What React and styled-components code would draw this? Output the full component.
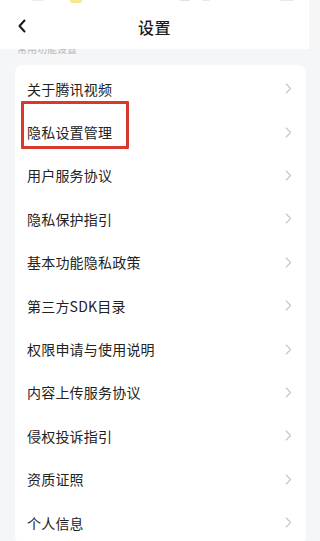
import React from "react";
import styled, { createGlobalStyle } from "styled-components";

const Global = createGlobalStyle`
  html, body { margin: 0; padding: 0; }
  body {
    background: #f5f6f8;
    font-family: "Noto Sans CJK SC", "Noto Sans", sans-serif;
    -webkit-font-smoothing: antialiased;
  }
`;

const Page = styled.div`
  width: 309px;
  height: 541px;
  overflow: hidden;
  background: #f5f6f8;
  display: flex;
  flex-direction: column;
`;

const Header = styled.div`
  background: #fff;
  height: 49px;
  flex: none;
  position: relative;
  z-index: 2;
  display: flex;
  align-items: center;
  justify-content: center;
`;

const StatusStrip = styled.div`
  position: absolute;
  top: 0;
  left: 0;
  right: 0;
  height: 4px;
  display: flex;
  align-items: flex-start;
`;

const StatusDot = styled.span`
  display: block;
  margin-left: ${(p) => p.$x}px;
  width: ${(p) => p.$w}px;
  height: ${(p) => p.$h}px;
  background: ${(p) => p.$c};
  border-radius: 0 0 4px 4px;
  filter: blur(0.6px);
`;

const Back = styled.div`
  position: absolute;
  left: 17px;
  top: 19px;
  width: 10px;
  height: 14px;
  display: flex;
`;

const Title = styled.div`
  font-size: 16px;
  font-weight: 500;
  color: #1c1c1c;
  margin-top: 5px;
  letter-spacing: 0.5px;
`;

const SectionLabel = styled.div`
  height: 21px;
  flex: none;
  overflow: hidden;
  padding-left: 17px;
  font-size: 10px;
  line-height: 10px;
  color: #b5b8bd;
  margin-top: -5px;
  position: relative;
  z-index: 1;
`;

const Card = styled.div`
  background: #fff;
  margin: 0 3px 0 15px;
  border-radius: 8px;
  padding-top: 2px;
`;

const Row = styled.div`
  height: 43.4px;
  display: flex;
  align-items: center;
  padding: 0 14px 0 12px;
  position: relative;
`;

const Label = styled.div`
  flex: 1;
  font-size: 14px;
  color: #222;
  letter-spacing: 0.2px;
`;

const Highlight = styled.div`
  position: absolute;
  left: 6px;
  top: -9px;
  width: 108px;
  height: 48px;
  box-sizing: border-box;
  border: 3px solid #d8392c;
  border-radius: 1px;
`;

const Chevron = () => (
  <svg width="7" height="11" viewBox="0 0 7 11" fill="none">
    <path d="M1.2 1 L5.6 5.5 L1.2 10" stroke="#c4c6ca" strokeWidth="1.1" strokeLinecap="round" strokeLinejoin="round" />
  </svg>
);

const items = [
  "关于腾讯视频",
  "隐私设置管理",
  "用户服务协议",
  "隐私保护指引",
  "基本功能隐私政策",
  "第三方SDK目录",
  "权限申请与使用说明",
  "内容上传服务协议",
  "侵权投诉指引",
  "资质证照",
  "个人信息",
];

export default function App() {
  return (
    <Page>
      <Global />
      <Header>
        <StatusStrip>
          <StatusDot $x={32} $w={12} $h={1} $c="#ececec" />
          <StatusDot $x={26} $w={12} $h={3} $c="#f9e58a" />
          <StatusDot $x={98} $w={10} $h={1} $c="#e2e2e2" />
          <StatusDot $x={12} $w={8} $h={1} $c="#e8e8e8" />
          <StatusDot $x={70} $w={14} $h={1} $c="#e8e8e8" />
        </StatusStrip>
        <Back>
          <svg width="10" height="14" viewBox="0 0 10 14" fill="none">
            <path d="M7.5 1.5 L2.5 7 L7.5 12.5" stroke="#1a1a1a" strokeWidth="2" strokeLinecap="round" strokeLinejoin="round" />
          </svg>
        </Back>
        <Title>设置</Title>
      </Header>
      <SectionLabel>常用功能设置</SectionLabel>
      <Card>
        {items.map((t, i) => (
          <Row key={t}>
            {i === 1 && <Highlight />}
            <Label>{t}</Label>
            <Chevron />
          </Row>
        ))}
      </Card>
    </Page>
  );
}
